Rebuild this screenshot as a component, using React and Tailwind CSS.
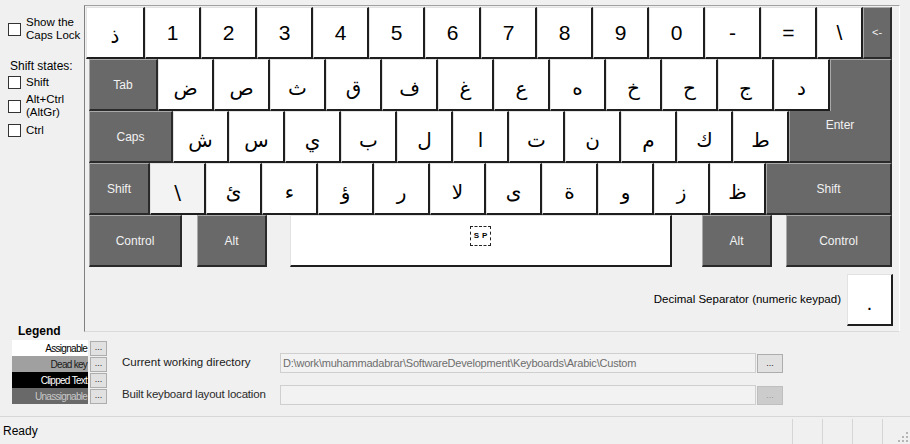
import React from "react";

const UI = "font-['Liberation_Sans',Arial,sans-serif]";
const AR = "font-['DejaVu_Sans',sans-serif]";

const WHITE =
  "h-[52px] shrink-0 bg-white border-t border-l border-r-2 border-b-2 border-t-[#e2e2e2] border-l-[#e2e2e2] border-r-[#1e1e1e] border-b-[#1e1e1e] flex items-center justify-center text-black";
const DARK =
  "h-[52px] shrink-0 bg-[#696969] border-t border-l border-r-2 border-b-2 border-t-[#a9a9a9] border-l-[#a9a9a9] border-r-[#2a2a2a] border-b-[#2a2a2a] flex items-center justify-center text-[#f2f2f2] text-[12px]";

function Key({ k }) {
  if (k.num) {
    return (
      <div className={`${WHITE} ${k.w} ${UI} text-[21px]`}>
        <span className="leading-none">{k.t}</span>
      </div>
    );
  }
  return (
    <div className={`${WHITE} ${k.w} ${AR} text-[20px] pt-[6px] ${k.bg || ""}`}>
      <span className="leading-none">{k.t}</span>
    </div>
  );
}

const row1 = [
  { t: "ذ", w: "w-[59px]" },
  ...["1", "2", "3", "4", "5", "6", "7", "8", "9", "0", "-", "="].map((t) => ({
    t,
    w: "w-[56px]",
    num: true,
  })),
  { t: "\\", w: "w-[46px]", num: true },
];

const row2 = ["ض", "ص", "ث", "ق", "ف", "غ", "ع", "ه", "خ", "ح", "ج", "د"].map((t) => ({
  t,
  w: "w-[56px]",
}));
const row3 = ["ش", "س", "ي", "ب", "ل", "ا", "ت", "ن", "م", "ك", "ط"].map((t) => ({
  t,
  w: "w-[56px]",
}));
const row4 = [
  { t: "\\", w: "w-[56px]", bg: "!bg-[#f3f3f3]" },
  ...["ئ", "ء", "ؤ", "ر", "لا", "ى", "ة", "و", "ز", "ظ"].map((t) => ({ t, w: "w-[56px]" })),
];

function Check() {
  return <div className="w-[13px] h-[13px] shrink-0 border border-[#333333] bg-white" />;
}

function LegendRow({ label, cls }) {
  return (
    <div className="flex items-center h-[16px]">
      <div
        className={`w-[77px] h-[16px] flex items-center justify-end pr-[1px] text-[10px] tracking-[-0.7px] whitespace-nowrap overflow-hidden ${UI} ${cls}`}
      >
        {label}
      </div>
      <div className="ml-[2px] w-[17px] h-[15px] bg-[#e1e1e1] border border-[#adadad] flex items-end justify-center pb-[3px] text-[9px] leading-none text-[#222]">
        ...
      </div>
    </div>
  );
}

export default function App() {
  return (
    <div className={`w-[910px] h-[444px] bg-[#f0f0f0] overflow-hidden flex flex-col ${UI} text-[12px] text-black`}>
      {/* top area */}
      <div className="flex h-[331px] shrink-0">
        {/* sidebar */}
        <div className="w-[84px] shrink-0 flex flex-col pl-[8px] leading-[13px] text-[11.5px]">
          <div className="flex items-center mt-[16px] gap-[5px]">
            <Check />
            <div>
              <div>Show the</div>
              <div>Caps Lock</div>
            </div>
          </div>
          <div className="mt-[18px] pl-[2px] text-[12px]">Shift states:</div>
          <div className="flex items-center mt-[3px] gap-[5px]">
            <Check />
            <div>Shift</div>
          </div>
          <div className="flex items-center mt-[4px] gap-[5px]">
            <Check />
            <div>
              <div>Alt+Ctrl</div>
              <div>(AltGr)</div>
            </div>
          </div>
          <div className="flex items-center mt-[5px] gap-[5px]">
            <Check />
            <div>Ctrl</div>
          </div>
        </div>

        {/* keyboard panel */}
        <div className="mt-[5px] w-[816px] h-[327px] shrink-0 border-l border-t border-r border-b border-l-[#808080] border-t-[#a0a0a0] border-r-[#ffffff] border-b-[#dadada] pt-[1px] flex flex-col">
          {/* row 1 */}
          <div className="flex ml-[1px]">
            {row1.map((k, i) => (
              <Key key={i} k={k} />
            ))}
            <div className={`${DARK} w-[29px] ${UI} !text-[11px]`}>&lt;-</div>
          </div>
          {/* row 2 */}
          <div className="flex ml-[4px]">
            <div className={`${DARK} w-[69px] ${UI}`}>Tab</div>
            {row2.map((k, i) => (
              <Key key={i} k={k} />
            ))}
            <div className="h-[52px] w-[62px] shrink-0 bg-[#696969] border-t border-l border-r-2 border-t-[#a9a9a9] border-l-[#a9a9a9] border-r-[#2a2a2a]" />
          </div>
          {/* row 3 */}
          <div className="flex ml-[4px]">
            <div className={`${DARK} w-[84px] ${UI}`}>Caps</div>
            {row3.map((k, i) => (
              <Key key={i} k={k} />
            ))}
            <div
              className={`h-[52px] w-[103px] shrink-0 bg-[#696969] border-l border-r-2 border-b-2 border-l-[#a9a9a9] border-r-[#2a2a2a] border-b-[#2a2a2a] flex justify-center pt-[7px] text-[12px] leading-[14px] text-[#f2f2f2] ${UI}`}
            >
              Enter
            </div>
          </div>
          {/* row 4 */}
          <div className="flex ml-[4px]">
            <div className={`${DARK} w-[61px] ${UI}`}>Shift</div>
            {row4.map((k, i) => (
              <Key key={i} k={k} />
            ))}
            <div className={`${DARK} w-[126px] ${UI}`}>Shift</div>
          </div>
          {/* row 5 */}
          <div className="flex ml-[4px]">
            <div className={`${DARK} w-[93px] ${UI}`}>Control</div>
            <div className={`${DARK} w-[70px] ml-[15px] ${UI}`}>Alt</div>
            <div className={`${WHITE} w-[382px] ml-[23px]`}>
              <div className={`mb-[9px] w-[21px] h-[20px] border border-dashed border-[#222] flex items-center justify-center gap-[3px] text-[8px] font-bold leading-none ${UI}`}>
                <span>S</span>
                <span>P</span>
              </div>
            </div>
            <div className={`${DARK} w-[70px] ml-[30px] ${UI}`}>Alt</div>
            <div className={`${DARK} w-[106px] ml-[14px] ${UI}`}>Control</div>
          </div>
          {/* decimal row */}
          <div className="flex items-center justify-end mt-[7px] pr-[6px]">
            <div className="mr-[6px] text-[11.5px]">Decimal Separator (numeric keypad)</div>
            <div className={`${WHITE} w-[46px] pt-[12px] ${UI} text-[14px] font-bold`}>.</div>
          </div>
        </div>
      </div>

      {/* middle area */}
      <div className="flex h-[85px] shrink-0">
        <div className="ml-[12px] w-[95px] shrink-0 flex flex-col -mt-[7px]">
          <div className="pl-[6px] h-[14px] leading-[14px] font-bold text-[12px]">Legend</div>
          <div className="mt-[2px] flex flex-col">
            <LegendRow label="Assignable" cls="bg-white text-black" />
            <LegendRow label="Dead key" cls="bg-[#a0a0a0] text-[#1a1a1a]" />
            <LegendRow label="Clipped Text" cls="bg-black text-white" />
            <LegendRow label="Unassignable" cls="bg-[#696969] text-[#c8c8c8]" />
          </div>
        </div>
        <div className="ml-[15px] flex flex-col pt-[22px] gap-[12px]">
          <div className="flex items-center h-[20px]">
            <div className="w-[158px] text-[11.5px] text-[#1a1a1a]">Current working directory</div>
            <div className="w-[476px] h-[20px] border border-[#cfcfcf] bg-[#f2f2f2] flex items-center pl-[2px] text-[11px] text-[#6d6d6d] tracking-[-0.2px]">
              D:\work\muhammadabrar\SoftwareDevelopment\Keyboards\Arabic\Custom
            </div>
            <div className="ml-[1px] w-[26px] h-[19px] bg-[#e1e1e1] border border-[#adadad] flex items-end justify-center pb-[4px] text-[9px] leading-none text-[#222]">
              ...
            </div>
          </div>
          <div className="flex items-center h-[20px]">
            <div className="w-[158px] text-[11.5px] text-[#2a2a2a] tracking-[-0.2px]">Built keyboard layout location</div>
            <div className="w-[476px] h-[20px] border border-[#cfcfcf] bg-[#f2f2f2]" />
            <div className="ml-[1px] w-[26px] h-[19px] bg-[#cccccc] border border-[#bfbfbf] flex items-end justify-center pb-[4px] text-[9px] leading-none text-[#9a9a9a]">
              ...
            </div>
          </div>
        </div>
      </div>

      {/* status bar */}
      <div className="flex-1 border-t border-[#d7d7d7] flex items-stretch">
        <div className="flex items-center pl-[3px] text-[12px]">Ready</div>
        <div className="ml-auto flex pt-[2px]">
          <div className="w-[30px] border-l border-[#d5d5d5]" />
          <div className="w-[30px] border-l border-[#d5d5d5]" />
          <div className="w-[30px] border-l border-[#d5d5d5]" />
          <div className="w-[28px] border-l border-[#d5d5d5] flex items-end justify-end pr-[2px] pb-[2px]">
            <svg width="10" height="10" viewBox="0 0 10 10">
              <rect x="8" y="0" width="2" height="2" fill="#b5b5b5" />
              <rect x="4" y="4" width="2" height="2" fill="#b5b5b5" />
              <rect x="8" y="4" width="2" height="2" fill="#b5b5b5" />
              <rect x="0" y="8" width="2" height="2" fill="#b5b5b5" />
              <rect x="4" y="8" width="2" height="2" fill="#b5b5b5" />
              <rect x="8" y="8" width="2" height="2" fill="#b5b5b5" />
            </svg>
          </div>
        </div>
      </div>
    </div>
  );
}
